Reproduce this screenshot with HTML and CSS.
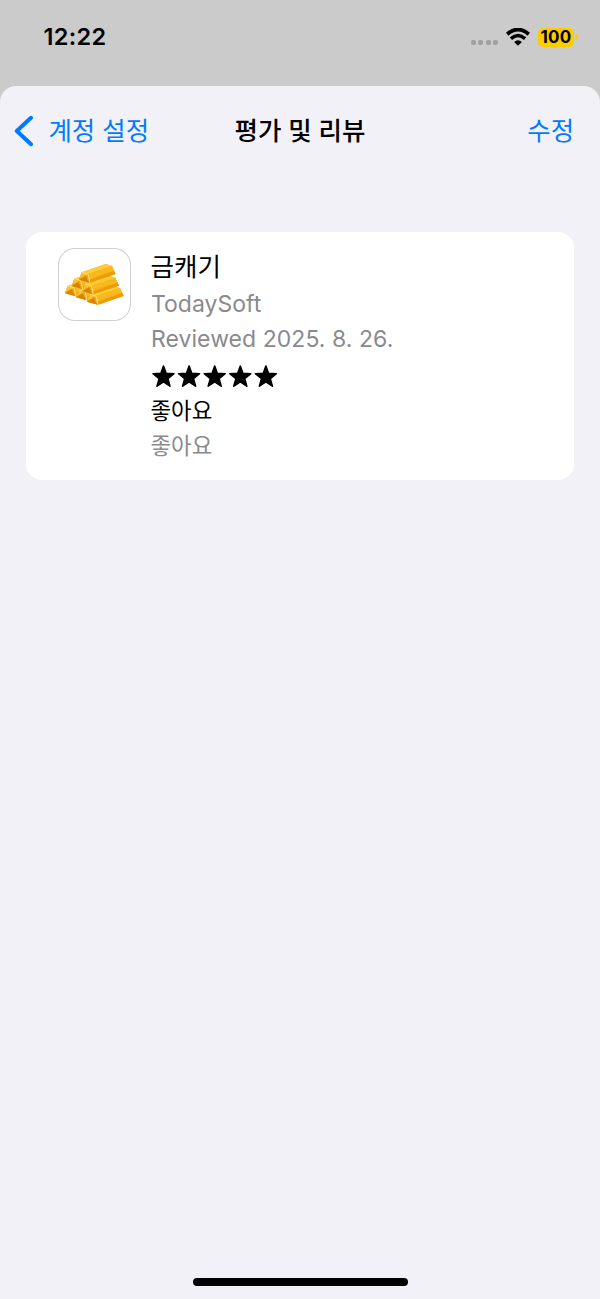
FILE: index.html
```html
<!DOCTYPE html>
<html lang="ko">
<head>
<meta charset="utf-8">
<title>평가 및 리뷰</title>
<link rel="stylesheet" href="styles.css">
</head>
<body>
<div class="status">
  <span class="time">12:22</span>
  <div class="indicators">
    <div class="dots"><i></i><i></i><i></i><i></i></div>
    <svg class="wifi" width="24" height="18" viewBox="0 0 24 18">
      <path d="M1.2 6.2Q12-3.2 22.8 6.2" fill="none" stroke="#000" stroke-width="3.8"/>
      <path d="M4.9 10.6Q12 4.4 19.1 10.6" fill="none" stroke="#000" stroke-width="3.4"/>
      <path d="M8.1 14Q12 10.3 15.9 14L12 17.8Z"/>
    </svg>
    <div class="battery"><span class="level">100</span><i class="cap"></i></div>
  </div>
</div>
<main class="sheet">
  <nav class="nav">
    <a class="back">
      <svg width="20" height="32" viewBox="0 0 20 32"><path d="M17 2.8L2.8 16L17 29.2" fill="none" stroke="#007aff" stroke-width="4" stroke-linecap="round" stroke-linejoin="round"/></svg>
      <span>계정 설정</span>
    </a>
    <h1 class="title">평가 및 리뷰</h1>
    <a class="edit">수정</a>
  </nav>
  <section class="card">
    <div class="icon">
      <svg width="73" height="73" viewBox="24 24 219 219">
        <defs>
          <g id="bar">
            <path d="M0 0L72-25L91-19L102 5L25 31L-8 22Z" fill="#f6b21c"/>
            <path d="M0 0L72-25L91-19L19 5Z" fill="#ffcb3a"/>
            <path d="M19 5L91-19L98-3Q72-5 29 18L23 25Z" fill="#f9b91d"/>
            <path d="M25 22Q65 7 98-4L102 5L25 31Z" fill="#eb9c06"/>
            <path d="M0 0L19 5L25 31L-8 22Z" fill="#f3a714"/>
            <path d="M0 0L19 5L-6 18Z" fill="#fac02e"/>
            <path d="M-8 22L12 10L20 27L25 31Z" fill="#d98206"/>
            <path d="M0 0L19 5L25 31" fill="none" stroke="#ffe78a" stroke-width="2.6"/>
          </g>
        </defs>
        <use href="#bar" transform="translate(53 138)"/>
        <use href="#bar" transform="translate(86 150)"/>
        <use href="#bar" transform="translate(119 163)"/>
        <use href="#bar" transform="translate(73 116)"/>
        <use href="#bar" transform="translate(105 132)"/>
        <use href="#bar" transform="translate(95 97)"/>
      </svg>
    </div>
    <div class="details">
      <div class="name">금캐기</div>
      <div class="meta">TodaySoft</div>
      <div class="meta date">Reviewed 2025. 8. 26.</div>
      <svg class="stars" width="128" height="24" viewBox="0 0 128 24">
        <defs><path id="star" d="M11.5 1L14.2 8.4L22 8.7L15.9 13.6L18 21.2L11.5 16.9L5 21.2L7.1 13.6L1 8.7L8.8 8.4Z" stroke="#000" stroke-width="1.6" stroke-linejoin="round"/></defs>
        <use href="#star"/><use href="#star" x="25.6"/><use href="#star" x="51.2"/><use href="#star" x="76.8"/><use href="#star" x="102.4"/>
      </svg>
      <div class="review">좋아요</div>
      <div class="review body">좋아요</div>
    </div>
  </section>
  <div class="home"></div>
</main>
</body>
</html>
```
FILE: styles.css
```css
* { box-sizing: border-box; }
body {
  margin: 0;
  height: 1299px;
  display: flex;
  flex-direction: column;
  overflow: hidden;
  background: #cbcbcb;
  color: #000;
  font-family: Inter, "Noto Sans CJK KR", sans-serif;
}
.status {
  height: 86px;
  flex: none;
  display: flex;
  justify-content: space-between;
  align-items: flex-start;
  padding: 22px 22px 0 43.5px;
}
.time { font-size: 23.5px; line-height: 30px; font-weight: 600; letter-spacing: 0.3px; }
.indicators { display: flex; align-items: center; height: 30px; }
.dots { display: flex; gap: 2.5px; margin: 11px 8px 0 0; }
.dots i { width: 5px; height: 5px; border-radius: 2px; background: #a0a0a0; }
.wifi { margin-right: 8px; }
.battery { display: flex; align-items: center; gap: 2px; }
.level {
  width: 36px;
  height: 19px;
  border-radius: 5px;
  background: #ffcc00;
  text-align: center;
  font-size: 17px;
  line-height: 19px;
  font-weight: 700;
  letter-spacing: 0.3px;
}
.cap { width: 2px; height: 6px; border-radius: 0 3px 3px 0; background: #ffcc00; }
.sheet {
  flex: 1;
  display: flex;
  flex-direction: column;
  background: #f2f1f7;
  border-radius: 16px 16px 0 0;
}
.nav {
  height: 90px;
  display: grid;
  grid-template-columns: 1fr auto 1fr;
  align-items: center;
  padding: 0 26px 0 14px;
  font-size: 25.4px;
  line-height: 36px;
  color: #007aff;
}
.back { display: flex; align-items: center; gap: 14.5px; white-space: nowrap; }
.title { margin: 0 -12px 0 0; color: #000; font-size: 25.5px; font-weight: 500; line-height: 36px; }
.edit { text-align: right; }
.card {
  height: 248px;
  margin: 56px 26px 0;
  padding: 16px 32px 0;
  display: flex;
  gap: 20px;
  background: #fff;
  border-radius: 16px;
}
.icon {
  width: 73px;
  height: 73px;
  flex: none;
  border-radius: 17px;
  box-shadow: inset 0 0 0 1px #cfcfcf;
}
.icon svg { display: block; }
.details { display: flex; flex-direction: column; align-items: flex-start; padding-top: 1px; white-space: nowrap; }
.name { font-size: 25.5px; line-height: 36px; margin: 0 0 2px -0.5px; }
.meta { font-size: 23px; line-height: 35px; color: #8a8a8e; }
.date { letter-spacing: 0.05px; }
.stars { margin: 8px 0 4px 1px; }
.review { font-size: 22.4px; line-height: 35px; margin-left: -0.5px; }
.body { color: #8a8a8e; }
.home { width: 215px; height: 8px; margin: auto auto 13px; border-radius: 4px; background: #000; }
```
